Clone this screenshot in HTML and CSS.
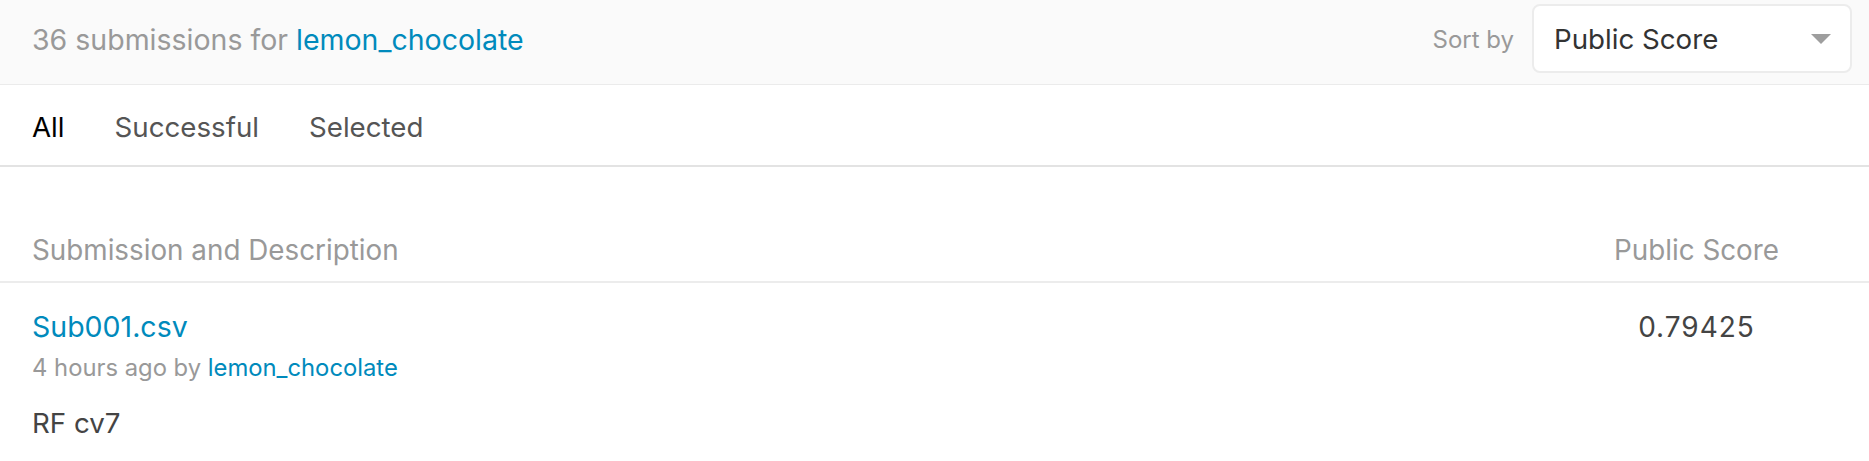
FILE: index.html
```html
<!DOCTYPE html>
<html>
<head>
<meta charset="utf-8">
<link rel="stylesheet" href="styles.css">
</head>
<body>
<div class="topbar">
  <div class="title"><span class="count">36 submissions for</span> <a class="link" href="#">lemon_chocolate</a></div>
  <div class="sort">
    <span class="sort-label">Sort by</span>
    <div class="select">
      <span class="select-value">Public Score</span>
      <span class="caret"></span>
    </div>
  </div>
</div>
<div class="tabs">
  <span class="tab active">All</span>
  <span class="tab">Successful</span>
  <span class="tab">Selected</span>
</div>
<div class="table">
  <div class="thead">
    <span class="th-main">Submission and Description</span>
    <span class="th-score">Public Score</span>
  </div>
  <div class="row">
    <div class="cell-main">
      <a class="file link" href="#">Sub001.csv</a>
      <div class="meta">4 hours ago by <a class="link" href="#">lemon_chocolate</a></div>
      <div class="desc">RF cv7</div>
    </div>
    <div class="cell-score">0.79425</div>
  </div>
</div>
</body>
</html>
```

FILE: styles.css
```css
html, body {
  margin: 0;
  padding: 0;
  background: #ffffff;
  font-family: Inter, "Noto Sans", sans-serif;
}
a { text-decoration: none; }
.link { color: #008abc; }

.topbar {
  height: 85px;
  box-sizing: border-box;
  background: #fafafa;
  border-bottom: 1px solid #ebebeb;
  display: flex;
  align-items: center;
  justify-content: space-between;
  padding: 0 17px 7px 32px;
}
.title {
  font-size: 28.5px;
  line-height: 34px;
  color: #999999;
  margin-top: 3px;
}
.sort {
  display: flex;
  align-items: center;
  gap: 18px;
}
.sort-label {
  font-size: 24px;
  line-height: 30px;
  color: #999999;
  margin-top: 2px;
}
.select {
  width: 320px;
  height: 69px;
  box-sizing: border-box;
  background: #ffffff;
  border: 2px solid #ececec;
  border-radius: 8px;
  display: flex;
  align-items: center;
  justify-content: space-between;
  padding: 0 19px 0 20px;
}
.select-value {
  font-size: 27.7px;
  line-height: 34px;
  color: #333333;
}
.caret {
  width: 0;
  height: 0;
  border-left: 10px solid transparent;
  border-right: 10px solid transparent;
  border-top: 10px solid #9e9e9e;
}

.tabs {
  height: 76px;
  padding-top: 4px;
  border-bottom: 2px solid #e3e3e3;
  display: flex;
  align-items: center;
  padding-left: 32px;
  gap: 50px;
}
.tab {
  font-size: 27.7px;
  line-height: 34px;
  color: #555555;
}
.tab.active { color: #000000; }

.thead {
  height: 116px;
  border-bottom: 2px solid #ececec;
  display: flex;
  align-items: flex-end;
  justify-content: space-between;
  padding: 0 90px 14px 32px;
  box-sizing: border-box;
}
.th-main, .th-score {
  font-size: 27.8px;
  line-height: 34px;
  color: #999999;
}
.row {
  display: flex;
  justify-content: space-between;
  padding: 26.5px 90px 0 32px;
}
.cell-main {
  display: flex;
  flex-direction: column;
  align-items: flex-start;
}
.file {
  font-size: 28.5px;
  line-height: 34px;
}
.meta {
  font-size: 23.8px;
  line-height: 28px;
  color: #999999;
  margin-top: 10px;
}
.desc {
  font-size: 27.7px;
  line-height: 34px;
  color: #444444;
  margin-top: 24px;
}
.cell-score {
  width: 165px;
  text-align: center;
  font-size: 28px;
  line-height: 34px;
  letter-spacing: 1px;
  color: #444444;
}
```
